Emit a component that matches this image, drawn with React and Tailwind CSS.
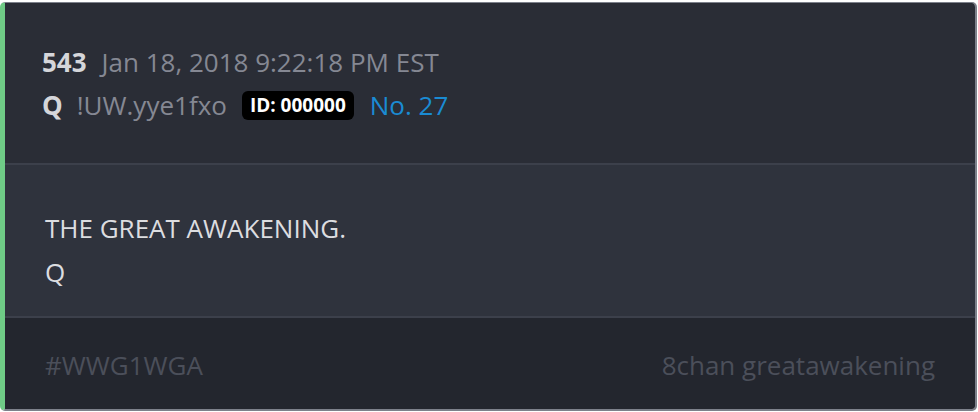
export default function App() {
  return (
    <div className="w-[978px] h-[412px] bg-white pt-[2px] pr-[1px] pb-[1px]" style={{ fontFamily: '"Open Sans", sans-serif' }}>
      <div className="h-full flex flex-col rounded-[5px] overflow-hidden border-t border-r-2 border-b-2 border-[#7d818b] border-l-[5px] border-l-[#6fcb86]">
        {/* header */}
        <div className="h-[162px] bg-[#2a2d36] pl-[37px] pt-[41px] border-b-2 border-[#3c404b] text-[26px] leading-[36px]">
          <div className="flex items-baseline">
            <span className="font-bold text-[#d5d6da]">543</span>
            <span className="ml-[15px] text-[#858893]">Jan 18, 2018 9:22:18 PM EST</span>
          </div>
          <div className="flex items-center mt-[7px]">
            <span className="font-bold text-[#d5d6da]">Q</span>
            <span className="ml-[14px] text-[#858893]">!UW.yye1fxo</span>
            <span className="ml-[15px] bg-black text-white font-bold text-[19px] leading-[29px] px-[8px] rounded-[6px]">ID: 000000</span>
            <span className="ml-[16px] text-[#1a8bd3]">No. 27</span>
          </div>
        </div>
        {/* body */}
        <div className="h-[153px] bg-[#2f333d] pl-[40px] pt-[41px] border-b-2 border-[#3c404b] text-[26px] leading-[44px] text-[#dcdde0]">
          <div>THE GREAT AWAKENING.</div>
          <div>Q</div>
        </div>
        {/* footer */}
        <div className="flex-1 bg-[#23262e] pl-[40px] pr-[40px] pt-[29px] flex justify-between text-[26px] leading-[36px] text-[#4b4f5a]">
          <span>#WWG1WGA</span>
          <span>8chan greatawakening</span>
        </div>
      </div>
    </div>
  )
}
